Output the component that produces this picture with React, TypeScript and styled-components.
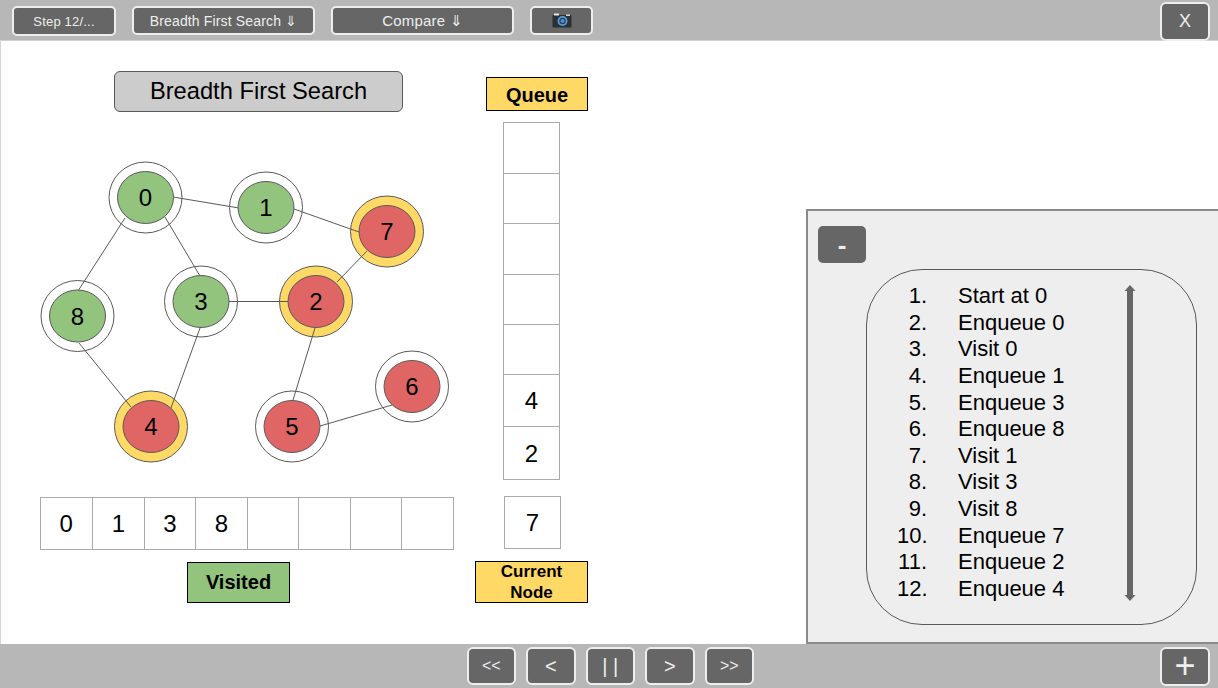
import { FC } from "react";
import styled, { createGlobalStyle } from "styled-components";

const GREEN = "#93c47d";
const RED = "#e06666";
const YELLOW = "#ffd966";
const LINE = "#595959";

interface GraphNode {
  id: number;
  x: number;
  y: number;
  fill: string;
  ring: string;
}

const nodes: GraphNode[] = [
  { id: 0, x: 145.5, y: 197.5, fill: GREEN, ring: "#ffffff" },
  { id: 1, x: 266, y: 207.5, fill: GREEN, ring: "#ffffff" },
  { id: 7, x: 387, y: 231.5, fill: RED, ring: YELLOW },
  { id: 8, x: 77.5, y: 316, fill: GREEN, ring: "#ffffff" },
  { id: 3, x: 201, y: 301.5, fill: GREEN, ring: "#ffffff" },
  { id: 2, x: 316, y: 301.5, fill: RED, ring: YELLOW },
  { id: 4, x: 151, y: 426.5, fill: RED, ring: YELLOW },
  { id: 5, x: 292, y: 426.5, fill: RED, ring: "#ffffff" },
  { id: 6, x: 412, y: 386.5, fill: RED, ring: "#ffffff" },
];

const edges = [
  [173, 197, 239, 208],
  [294, 209, 359, 232],
  [125, 218, 78, 291],
  [165, 217, 200, 276],
  [229, 301.5, 288, 301.5],
  [367, 251, 337, 282],
  [200, 328, 171, 408],
  [79, 343, 131, 407],
  [315, 328, 293, 400],
  [320, 426, 392, 405],
];

const steps = [
  "Start at 0",
  "Enqueue 0",
  "Visit 0",
  "Enqueue 1",
  "Enqueue 3",
  "Enqueue 8",
  "Visit 1",
  "Visit 3",
  "Visit 8",
  "Enqueue 7",
  "Enqueue 2",
  "Enqueue 4",
];

const visited = ["0", "1", "3", "8", "", "", "", ""];
const queue = ["", "", "", "", "", "4", "2"];

const CameraIcon: FC = () => (
  <svg width="20" height="15" viewBox="0 0 20 15">
    <rect x="0.5" y="2" width="19" height="12.5" rx="1" fill="#2b2f36" />
    <rect x="2" y="0.5" width="5" height="2" fill="#e8e8e8" />
    <rect x="14" y="1.5" width="4" height="1.5" fill="#cfd4da" />
    <circle cx="10.5" cy="8" r="5" fill="#5b9bd5" />
    <circle cx="10.5" cy="8" r="3.2" fill="#23405e" />
    <circle cx="10.5" cy="8" r="2" fill="#4f8fca" />
  </svg>
);

const Graph: FC = () => (
  <GraphSvg viewBox="40 155 414 310">
    {nodes.map((n) => (
      <ellipse
        key={n.id}
        cx={n.x}
        cy={n.y}
        rx={36.5}
        ry={35.5}
        fill={n.ring}
        stroke={LINE}
        strokeWidth="1"
      />
    ))}
    {edges.map(([x1, y1, x2, y2], i) => (
      <line key={i} x1={x1} y1={y1} x2={x2} y2={y2} stroke={LINE} strokeWidth="1" />
    ))}
    {nodes.map((n) => (
      <g key={n.id}>
        <ellipse cx={n.x} cy={n.y} rx={28} ry={26} fill={n.fill} stroke={LINE} strokeWidth="1" />
        <NodeLabel x={n.x} y={n.y + 8.5} textAnchor="middle">
          {n.id}
        </NodeLabel>
      </g>
    ))}
  </GraphSvg>
);

const DoubleArrow: FC = () => (
  <ArrowSvg viewBox="0 0 12 316">
    <rect x="3" y="4" width="6" height="308" fill="#666666" />
    <polygon points="6,0 11.5,6 0.5,6" fill="#666666" />
    <polygon points="6,316 11.5,310 0.5,310" fill="#666666" />
  </ArrowSvg>
);

const App: FC = () => {
  return (
    <>
      <GlobalStyle />
      <Page>
        <TopBar>
          <ToolButton $width={104} $height={30} $size={13} $spacing={0.2}>
            Step 12/...
          </ToolButton>
          <ToolButton $width={183} $size={14} $spacing={0.15}>
            Breadth First Search ⇓
          </ToolButton>
          <ToolButton $width={183} $size={15} $spacing={0.2}>
            Compare ⇓
          </ToolButton>
          <ToolButton $width={63}>
            <CameraIcon />
          </ToolButton>
          <TopCorner $size={18}>X</TopCorner>
        </TopBar>

        <Main>
          <LeftColumn>
            <Title>Breadth First Search</Title>
            <Graph />
            <VisitedRow>
              {visited.map((v, i) => (
                <VisitedCell key={i}>{v}</VisitedCell>
              ))}
            </VisitedRow>
            <VisitedLabel>Visited</VisitedLabel>
          </LeftColumn>

          <QueueColumn>
            <QueueLabel>Queue</QueueLabel>
            <QueueStack>
              {queue.map((q, i) => (
                <QueueCell key={i} $filled={q !== ""}>
                  {q}
                </QueueCell>
              ))}
            </QueueStack>
            <CurrentCell>7</CurrentCell>
            <CurrentLabel>
              Current
              <br />
              Node
            </CurrentLabel>
          </QueueColumn>

          <StepsPanel>
            <MinusButton>-</MinusButton>
            <StepsBox>
              <StepsList>
                {steps.map((s, i) => (
                  <StepRow key={s}>
                    <StepNumber>{i + 1}.</StepNumber>
                    <span>{s}</span>
                  </StepRow>
                ))}
              </StepsList>
              <DoubleArrow />
            </StepsBox>
          </StepsPanel>
        </Main>

        <BottomBar>
          <Transport>
            <NavButton $size={16}>&lt;&lt;</NavButton>
            <NavButton $size={20}>&lt;</NavButton>
            <NavButton $size={20}>| |</NavButton>
            <NavButton $size={20}>&gt;</NavButton>
            <NavButton $size={16}>&gt;&gt;</NavButton>
          </Transport>
          <CornerButton $size={36}>+</CornerButton>
        </BottomBar>
      </Page>
    </>
  );
};

export default App;

const GlobalStyle = createGlobalStyle`
  html, body {
    margin: 0;
    padding: 0;
    background: #ffffff;
    overflow: hidden;
  }
  * {
    box-sizing: border-box;
  }
  body {
    font-family: "Liberation Sans", Arial, sans-serif;
    color: #000000;
  }
`;

const Page = styled.div`
  width: 1218px;
  height: 688px;
  display: flex;
  flex-direction: column;
`;

const TopBar = styled.div`
  height: 41px;
  flex: none;
  display: flex;
  align-items: flex-start;
  gap: 16px;
  padding: 6px 8px 0 12px;
  background: #b7b7b7;
  border-bottom: 1px solid #d0d0d0;
`;

const ToolButton = styled.div<{ $width: number; $height?: number; $size?: number; $spacing?: number }>`
  width: ${(p) => p.$width}px;
  height: ${(p) => p.$height ?? 29}px;
  display: flex;
  align-items: center;
  justify-content: center;
  background: #666666;
  border: 2px solid #eeeeee;
  border-radius: 5px;
  color: #eeeeee;
  font-size: ${(p) => p.$size ?? 14}px;
  letter-spacing: ${(p) => p.$spacing ?? 0}px;
`;

const CornerButton = styled.div<{ $size: number }>`
  margin-left: auto;
  width: 50px;
  height: 39px;
  display: flex;
  align-items: center;
  justify-content: center;
  background: #666666;
  border: 2px solid #eeeeee;
  border-radius: 6px;
  color: #eeeeee;
  font-size: ${(p) => p.$size}px;
`;

const TopCorner = styled(CornerButton)`
  margin-top: -4px;
`;

const Main = styled.div`
  flex: 1;
  min-height: 0;
  display: flex;
  border-left: 1px solid #d4d4d4;
`;

const LeftColumn = styled.div`
  width: 414px;
  margin-left: 39px;
  padding-top: 30px;
  flex: none;
`;

const Title = styled.div`
  margin-left: 74px;
  width: 289px;
  height: 41px;
  display: flex;
  align-items: center;
  justify-content: center;
  background: #cccccc;
  border: 1px solid ${LINE};
  border-radius: 6px;
  font-size: 23.7px;
`;

const GraphSvg = styled.svg`
  display: block;
  width: 414px;
  height: 310px;
  margin-top: 43px;
`;

const NodeLabel = styled.text`
  font-family: "Liberation Sans", Arial, sans-serif;
  font-size: 24px;
  fill: #000000;
`;

const VisitedRow = styled.div`
  margin: 32px 0 0 -0.5px;
  height: 53px;
  display: grid;
  grid-template-columns: repeat(8, 1fr);
  border: 1px solid #aaaaaa;
`;

const VisitedCell = styled.div`
  display: flex;
  align-items: center;
  justify-content: center;
  padding-top: 1px;
  font-size: 24px;
  border-left: 1px solid #aaaaaa;
  &:first-child {
    border-left: none;
  }
`;

const VisitedLabel = styled.div`
  margin: 12px 0 0 147px;
  width: 103px;
  height: 41px;
  display: flex;
  align-items: center;
  justify-content: center;
  background: ${GREEN};
  border: 1px solid #000000;
  font-size: 20px;
  font-weight: 700;
`;

const QueueColumn = styled.div`
  width: 114px;
  margin-left: 21px;
  padding-top: 36px;
  flex: none;
`;

const QueueLabel = styled.div`
  margin-left: 11px;
  width: 102px;
  height: 34px;
  display: flex;
  align-items: center;
  justify-content: center;
  padding-top: 2px;
  background: ${YELLOW};
  border: 1px solid #000000;
  font-size: 20px;
  font-weight: 700;
`;

const QueueStack = styled.div`
  margin: 11px 0 0 28px;
  width: 57px;
  border: 1px solid #aaaaaa;
`;

const QueueCell = styled.div<{ $filled: boolean }>`
  height: ${(p) => (p.$filled ? 52.4 : 50.2)}px;
  display: flex;
  align-items: center;
  justify-content: center;
  padding-top: ${(p) => (p.$filled ? 1 : 0)}px;
  font-size: 24px;
  border-top: 1px solid #aaaaaa;
  &:first-child {
    border-top: none;
  }
`;

const CurrentCell = styled.div`
  margin: 16px 0 0 29px;
  width: 57px;
  height: 53px;
  display: flex;
  align-items: center;
  justify-content: center;
  padding-top: 1px;
  font-size: 24px;
  border: 1px solid #aaaaaa;
`;

const CurrentLabel = styled.div`
  margin-top: 12px;
  width: 113px;
  height: 42px;
  display: flex;
  align-items: center;
  justify-content: center;
  text-align: center;
  background: ${YELLOW};
  border: 1px solid #000000;
  font-size: 17px;
  line-height: 21px;
  font-weight: 700;
`;

const StepsPanel = styled.div`
  margin-left: auto;
  align-self: flex-end;
  width: 412px;
  height: 435px;
  padding: 15px 0 0 10px;
  background: #eeeeee;
  border-top: 2px solid #8a8a8a;
  border-left: 2px solid #8a8a8a;
  border-bottom: 2px solid #8a8a8a;
`;

const MinusButton = styled.div`
  width: 48px;
  height: 37px;
  padding-top: 2px;
  display: flex;
  align-items: center;
  justify-content: center;
  background: #666666;
  border-radius: 5px;
  color: #eeeeee;
  font-size: 26px;
  font-weight: 700;
`;

const StepsBox = styled.div`
  margin: 6px 0 0 48px;
  width: 331px;
  height: 356px;
  display: flex;
  padding: 13.3px 0 0 30px;
  border: 1px solid ${LINE};
  border-radius: 56px;
`;

const StepsList = styled.div`
  width: 226px;
  flex: none;
  font-size: 22px;
  line-height: 26.6px;
`;

const StepRow = styled.div`
  display: grid;
  grid-template-columns: 30px 1fr;
  column-gap: 31px;
`;

const StepNumber = styled.span`
  text-align: right;
`;

const ArrowSvg = styled.svg`
  display: block;
  width: 12px;
  height: 316px;
  margin: 2px 0 0 1px;
`;

const BottomBar = styled.div`
  height: 44px;
  flex: none;
  display: flex;
  align-items: center;
  padding: 0 8px 0 466.5px;
  background: #b7b7b7;
`;

const Transport = styled.div`
  display: flex;
  gap: 10px;
`;

const NavButton = styled.div<{ $size: number }>`
  width: 49.5px;
  height: 38px;
  display: flex;
  align-items: center;
  justify-content: center;
  background: #666666;
  border: 2px solid #eeeeee;
  border-radius: 6px;
  color: #eeeeee;
  font-size: ${(p) => p.$size}px;
`;
